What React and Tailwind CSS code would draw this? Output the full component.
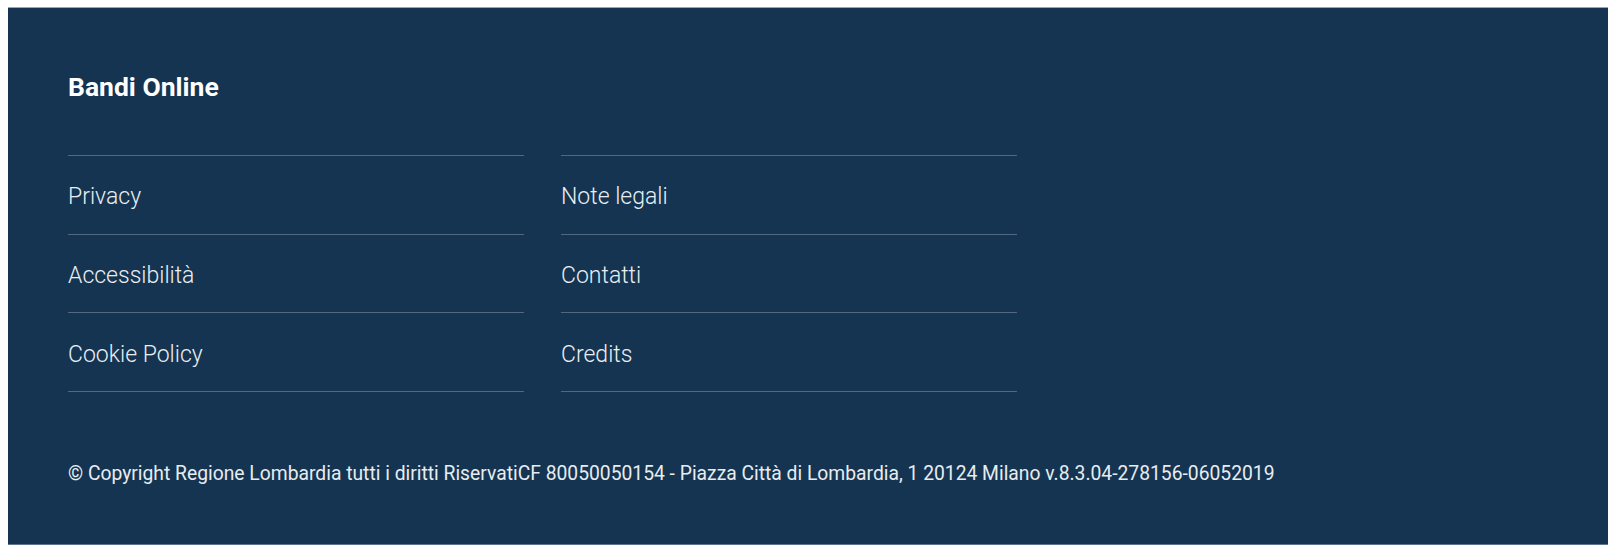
import React from 'react';

const linksLeft = ['Privacy', 'Accessibilità', 'Cookie Policy'];
const linksRight = ['Note legali', 'Contatti', 'Credits'];

const FooterColumn = ({ items }) => (
  <ul className="border-t border-[#526880]">
    {items.map((item) => (
      <li key={item} className="border-b border-[#526880] h-[78.7px] flex items-center pt-[4px]">
        <a href="#" className="text-[23px] font-light text-[#eaeef3] leading-none">
          {item}
        </a>
      </li>
    ))}
  </ul>
);

const App = () => {
  return (
    <div
      className="bg-white w-full min-h-[552px] pt-[7px] pl-[8px] pr-[10px] pb-[8px]"
      style={{ fontFamily: 'Roboto, "Open Sans", sans-serif' }}
    >
      <footer className="bg-[#143451] border-t border-[#9aa4ae] border-b border-b-[#5c7590] pl-[60px] pt-[63px] pb-[56px]">
        <h2 className="text-[26.5px] font-bold text-white leading-[32px]">Bandi Online</h2>

        <div className="mt-[52px] grid grid-cols-[456px_456px] gap-x-[37px]">
          <FooterColumn items={linksLeft} />
          <FooterColumn items={linksRight} />
        </div>

        <p className="mt-[68px] text-[19.3px] leading-[28px] text-[#e8ecf0]">
          © Copyright Regione Lombardia tutti i diritti RiservatiCF 80050050154 - Piazza Città di Lombardia, 1 20124 Milano v.8.3.04-278156-06052019
        </p>
      </footer>
    </div>
  );
};

export default App;
